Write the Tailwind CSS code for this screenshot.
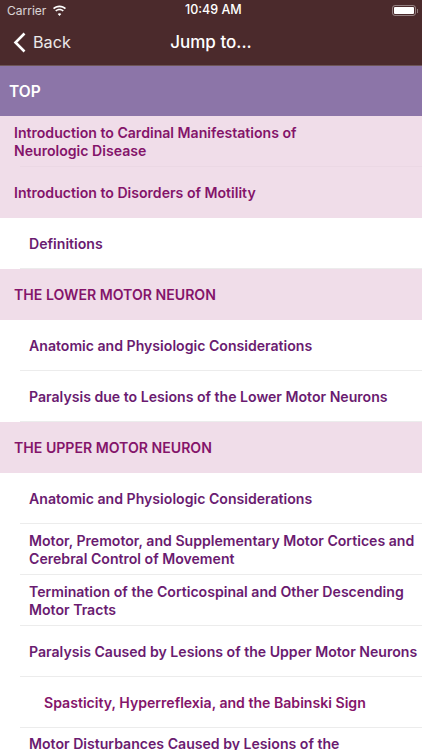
<!DOCTYPE html>
<html lang="en">
<head>
    <meta charset="UTF-8">
    <title>Jump to...</title>
    <script src="https://cdn.jsdelivr.net/npm/@tailwindcss/browser@4"></script>
</head>
<body class="font-['Inter',sans-serif] h-[750px] overflow-hidden bg-white font-semibold text-[14.100px]">
    <!-- status + nav -->
    <div class="h-[66px] bg-[#4b2a2c] text-white border-b border-[#6d5557] flex flex-col font-normal">
        <div class="h-[21px] flex items-center justify-between px-[7px] text-[12px] relative">
            <div class="flex items-center gap-[6px] text-white/80">
                <span>Carrier</span>
                <svg width="15" height="11" viewBox="0 0 15 11" fill="white"><path d="M7.5 2.2c2.1 0 4 .8 5.4 2.1l1.1-1.2C12.3 1.500 10 .6 7.500.6S2.700 1.500 1 3.100l1.100 1.200C3.500 3 5.400 2.200 7.500 2.200zM7.500 5.300c1.200 0 2.300.5 3.200 1.200l1.100-1.200C10.600 4.300 9.100 3.700 7.500 3.700s-3.100.6-4.300 1.600l1.100 1.200c.9-.7 2-1.200 3.200-1.200zM7.500 8.300c-.7 0-1.300.3-1.800.7l1.800 1.900 1.800-1.900c-.5-.4-1.100-.7-1.800-.7z"/></svg>
            </div>
            <span class="absolute left-[185px] font-medium text-[12.500px]">10:49 AM</span>
            <div class="flex items-center mr-[-3px]">
                <div class="w-[24px] h-[11px] rounded-[3px] border border-white/40 p-px"><div class="w-full h-full bg-white rounded-[1px]"></div></div>
                <div class="w-px h-1 bg-white/40 ml-px"></div>
            </div>
        </div>
        <div class="flex-1 flex items-center relative pb-px">
            <div class="flex items-center pl-[13px] gap-[7px]">
                <svg width="13" height="21" viewBox="0 0 13 21" fill="none" stroke="white" stroke-width="2.600"><path d="M11.500 1.500 2.500 10.500l9 9"/></svg>
                <span class="text-[16.200px] text-white/90">Back</span>
            </div>
            <span class="absolute left-0 right-0 text-center text-[17px] font-medium">Jump to...</span>
        </div>
    </div>

    <div class="h-[50px] bg-[#8c75a8] flex items-center pl-[9px] pt-0.5 text-white text-[15.500px]">TOP</div>

    <div class="h-[51px] bg-[#f0dde9] text-[#84146a] leading-[17.500px]"><div class="h-full ml-5 border-b border-[#ebd8e4] flex items-center pt-px"><p class="ml-[-6px]">Introduction to Cardinal Manifestations of<br>Neurologic Disease</p></div></div>
    <div class="h-[51px] bg-[#f0dde9] text-[#84146a]"><div class="h-full ml-5 flex items-center"><p class="ml-[-6px]">Introduction to Disorders of Motility</p></div></div>
    <div class="h-[51px] text-[#6a1b70]"><div class="h-full ml-5 pl-[9px] pt-px border-b border-[#ececec] flex items-center">Definitions</div></div>
    <div class="h-[51px] bg-[#f0dde9] text-[#84146a]"><div class="h-full ml-5 flex items-center"><p class="ml-[-6px]">THE LOWER MOTOR NEURON</p></div></div>
    <div class="h-[51px] text-[#6a1b70]"><div class="h-full ml-5 pl-[9px] pt-px border-b border-[#ececec] flex items-center">Anatomic and Physiologic Considerations</div></div>
    <div class="h-[51px] text-[#6a1b70]"><div class="h-full ml-5 pl-[9px] pt-px border-b border-[#ececec] flex items-center">Paralysis due to Lesions of the Lower Motor Neurons</div></div>
    <div class="h-[51px] bg-[#f0dde9] text-[#84146a]"><div class="h-full ml-5 flex items-center"><p class="ml-[-6px]">THE UPPER MOTOR NEURON</p></div></div>
    <div class="h-[51px] text-[#6a1b70]"><div class="h-full ml-5 pl-[9px] pt-px border-b border-[#ececec] flex items-center">Anatomic and Physiologic Considerations</div></div>
    <div class="h-[51px] text-[#6a1b70] leading-[17.500px]"><div class="h-full ml-5 pl-[9px] pt-px border-b border-[#ececec] flex items-center whitespace-nowrap"><p>Motor, Premotor, and Supplementary Motor Cortices and<br>Cerebral Control of Movement</p></div></div>
    <div class="h-[51px] text-[#6a1b70] leading-[17.500px]"><div class="h-full ml-5 pl-[9px] pt-px border-b border-[#ececec] flex items-center whitespace-nowrap"><p>Termination of the Corticospinal and Other Descending<br>Motor Tracts</p></div></div>
    <div class="h-[51px] text-[#6a1b70]"><div class="h-full ml-5 pl-[9px] pt-px border-b border-[#ececec] flex items-center whitespace-nowrap">Paralysis Caused by Lesions of the Upper Motor Neurons</div></div>
    <div class="h-[51px] text-[#84146a]"><div class="h-full ml-5 pl-6 pt-px border-b border-[#ececec] flex items-center">Spasticity, Hyperreflexia, and the Babinski Sign</div></div>
    <div class="h-[23px] overflow-hidden text-[#6a1b70] leading-[18px]"><div class="ml-5 pl-[9px] pt-[7px] whitespace-nowrap">Motor Disturbances Caused by Lesions of the</div></div>
</body>
</html>
